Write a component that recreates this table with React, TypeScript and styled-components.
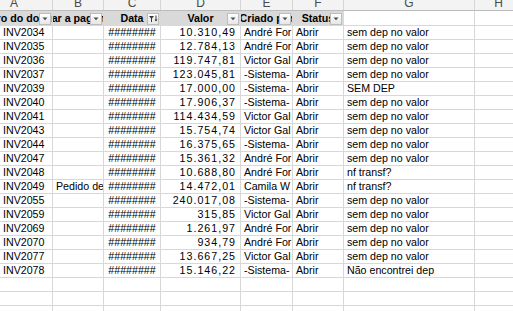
import React from "react";
import styled, { createGlobalStyle } from "styled-components";

const GlobalStyle = createGlobalStyle`
  html, body {
    margin: 0;
    padding: 0;
    background: #ffffff;
    overflow: hidden;
  }
  body {
    font-family: "Liberation Sans", Arial, sans-serif;
  }
`;

const COLS = "53px 51px 57px 80px 52px 51px 131px 48px";
const GRID = "#d8d8d8";

const Sheet = styled.div`
  display: flex;
  flex-direction: column;
  width: max-content;
  font-family: "Liberation Sans", Arial, sans-serif;
`;

const LetterRow = styled.div`
  display: grid;
  grid-template-columns: ${COLS};
  height: 11px;
  background: #f3f3f3;
  border-bottom: 1px solid #bcbcbc;
  box-sizing: border-box;
`;

const LetterCell = styled.div<{ $lead?: number }>`
  border-right: 1px solid #d6d6d6;
  color: #4a4a4a;
  font-size: 12px;
  line-height: 7px;
  text-align: ${(p) => (p.$lead ? "left" : "center")};
  padding-left: ${(p) => p.$lead ?? 0}px;
  overflow: hidden;
  white-space: nowrap;
`;

const HeaderRow = styled.div`
  display: grid;
  grid-template-columns: ${COLS};
  height: 15px;
`;

const HeaderCell = styled.div<{ $plain?: boolean; $start?: boolean }>`
  position: relative;
  background: ${(p) => (p.$plain ? "#ffffff" : "#d9d9d9")};
  border-right: 1px solid ${GRID};
  border-bottom: 1px solid ${GRID};
  font-weight: bold;
  font-size: 10.67px;
  line-height: 14px;
  color: #000;
  overflow: hidden;
  display: flex;
  justify-content: ${(p) => (p.$start ? "flex-start" : "center")};
  white-space: nowrap;
`;

const HeaderText = styled.span<{ $shift?: number }>`
  flex: none;
  margin-left: ${(p) => p.$shift ?? 0}px;
`;

const FilterButton = styled.span`
  position: absolute;
  right: 1px;
  bottom: 0;
  width: 12px;
  height: 12px;
  box-sizing: border-box;
  border: 1px solid #bdbdbd;
  background: linear-gradient(#ffffff, #e6e6e6);
  display: flex;
  align-items: center;
  justify-content: center;
`;

const DataRow = styled.div`
  display: grid;
  grid-template-columns: ${COLS};
  height: 14px;
`;

type Align = "left" | "right" | "center";

const Cell = styled.div<{ $align?: Align; $spaced?: boolean }>`
  border-right: 1px solid ${GRID};
  border-bottom: 1px solid ${GRID};
  font-size: 10.67px;
  line-height: 13px;
  color: #000;
  overflow: hidden;
  white-space: nowrap;
  text-align: ${(p) => p.$align ?? "left"};
  padding: ${(p) =>
    p.$align === "right" ? "0 4px 0 0" : p.$align === "center" ? "0" : "0 0 0 3px"};
  letter-spacing: ${(p) => (p.$spaced ? "1px" : "0")};
`;

const Arrow = () => (
  <svg width="8" height="6" viewBox="0 0 8 6">
    <path d="M1.5 1.5 H6.5 L4 4.2 Z" fill="#4a4a4a" />
  </svg>
);

const Funnel = () => (
  <svg width="10" height="10" viewBox="0 0 10 10">
    <path d="M1 2 H6 L4 4.5 V8 H3 V4.5 Z" fill="#3a3a3a" />
    <path d="M8 1.5 V7" stroke="#3a3a3a" strokeWidth="1" />
    <path d="M6.5 5.5 H9.5 L8 7.5 Z" fill="#3a3a3a" />
  </svg>
);

const letters: { l: string; lead?: number }[] = [
  { l: "A", lead: 10 },
  { l: "B" },
  { l: "C" },
  { l: "D" },
  { l: "E" },
  { l: "F" },
  { l: "G" },
  { l: "H" },
];

type Rec = {
  id: string;
  b?: string;
  valor: string;
  por: string;
  obs: string;
};

const rows: Rec[] = [
  { id: "INV2034", valor: "10.310,49", por: "André For", obs: "sem dep no valor" },
  { id: "INV2035", valor: "12.784,13", por: "André For", obs: "sem dep no valor" },
  { id: "INV2036", valor: "119.747,81", por: "Victor Gal", obs: "sem dep no valor" },
  { id: "INV2037", valor: "123.045,81", por: "-Sistema-", obs: "sem dep no valor" },
  { id: "INV2039", valor: "17.000,00", por: "-Sistema-", obs: "SEM DEP" },
  { id: "INV2040", valor: "17.906,37", por: "-Sistema-", obs: "sem dep no valor" },
  { id: "INV2041", valor: "114.434,59", por: "Victor Gal", obs: "sem dep no valor" },
  { id: "INV2043", valor: "15.754,74", por: "Victor Gal", obs: "sem dep no valor" },
  { id: "INV2044", valor: "16.375,65", por: "-Sistema-", obs: "sem dep no valor" },
  { id: "INV2047", valor: "15.361,32", por: "André For", obs: "sem dep no valor" },
  { id: "INV2048", valor: "10.688,80", por: "André For", obs: "nf transf?" },
  { id: "INV2049", b: "Pedido de", valor: "14.472,01", por: "Camila W", obs: "nf transf?" },
  { id: "INV2055", valor: "240.017,08", por: "-Sistema-", obs: "sem dep no valor" },
  { id: "INV2059", valor: "315,85", por: "Victor Gal", obs: "sem dep no valor" },
  { id: "INV2069", valor: "1.261,97", por: "André For", obs: "sem dep no valor" },
  { id: "INV2070", valor: "934,79", por: "André For", obs: "sem dep no valor" },
  { id: "INV2077", valor: "13.667,25", por: "Victor Gal", obs: "sem dep no valor" },
  { id: "INV2078", valor: "15.146,22", por: "-Sistema-", obs: "Não encontrei dep" },
];

const headers: { t: string; shift?: number; filtered?: boolean }[] = [
  { t: "Número do documento", shift: -33 },
  { t: "Liberar a pagamento" },
  { t: "Data", filtered: true },
  { t: "Valor" },
  { t: "Criado por" },
  { t: "Status" },
];

export default function App() {
  return (
    <>
      <GlobalStyle />
      <Sheet>
        <LetterRow>
          {letters.map((c) => (
            <LetterCell key={c.l} $lead={c.lead}>
              {c.l}
            </LetterCell>
          ))}
        </LetterRow>
        <HeaderRow>
          {headers.map((h) => (
            <HeaderCell key={h.t} $start={h.shift !== undefined}>
              <HeaderText $shift={h.shift}>{h.t}</HeaderText>
              <FilterButton>{h.filtered ? <Funnel /> : <Arrow />}</FilterButton>
            </HeaderCell>
          ))}
          <HeaderCell $plain />
          <HeaderCell $plain />
        </HeaderRow>
        {rows.map((r) => (
          <DataRow key={r.id}>
            <Cell>{r.id}</Cell>
            <Cell>{r.b ?? ""}</Cell>
            <Cell $align="center">########</Cell>
            <Cell $align="right" $spaced>
              {r.valor}
            </Cell>
            <Cell>{r.por}</Cell>
            <Cell>Abrir</Cell>
            <Cell>{r.obs}</Cell>
            <Cell />
          </DataRow>
        ))}
        {[0, 1, 2].map((i) => (
          <DataRow key={"empty" + i}>
            {letters.map((c) => (
              <Cell key={c.l} />
            ))}
          </DataRow>
        ))}
      </Sheet>
    </>
  );
}
